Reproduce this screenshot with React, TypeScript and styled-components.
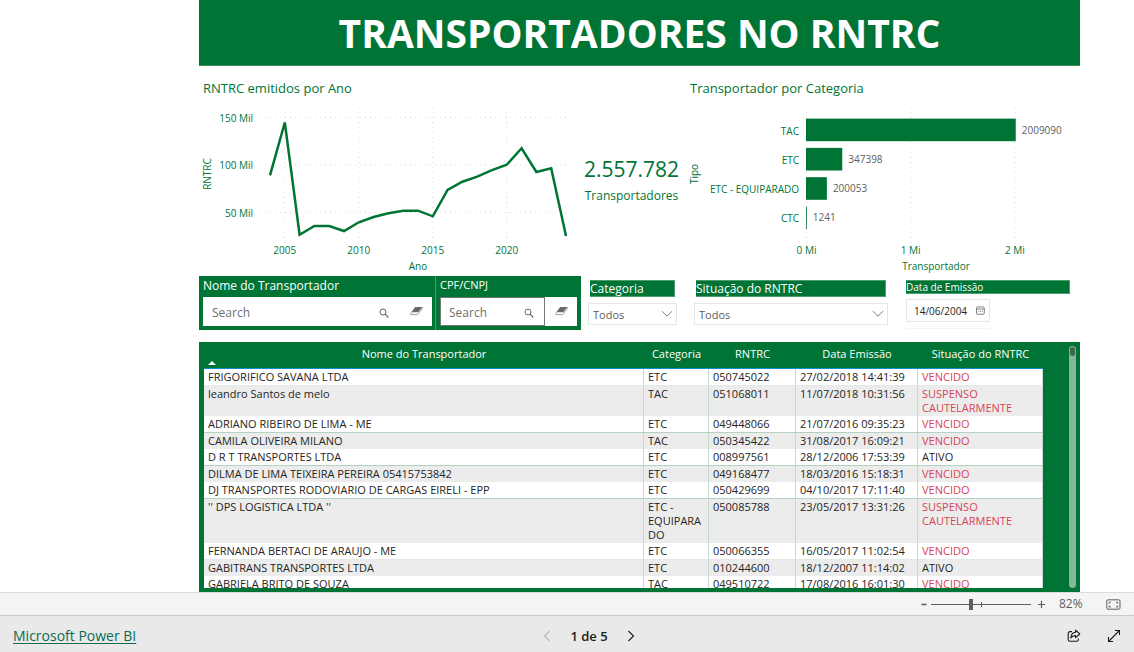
import React from "react";
import styled, { createGlobalStyle } from "styled-components";

const green = "#007435";
const sans = '"Open Sans", "Noto Sans", sans-serif';

const GlobalStyle = createGlobalStyle`
  *, *::before, *::after { box-sizing: border-box; }
  body { margin: 0; background: #fff; font-family: ${sans}; }
  button, input, select { font-family: inherit; }
`;

const Shell = styled.div`
  display: flex;
  flex-direction: column;
  height: 100vh;
`;

const Report = styled.main`
  flex: 1;
  min-height: 0;
  display: flex;
  flex-direction: column;
  padding: 0 54px 0 199px;
  overflow: hidden;
`;

const Banner = styled.h1`
  flex: none;
  display: flex;
  align-items: center;
  justify-content: center;
  height: 66px;
  margin: 0;
  background: ${green};
  border-bottom: 1px solid #3d9364;
  color: #fff;
  font-size: 39px;
  line-height: 40px;
  font-weight: 700;
`;

const Charts = styled.section`
  flex: none;
  display: grid;
  grid-template-columns: 382fr 105fr 394fr;
  height: 210px;
`;

const Visual = styled.div`
  display: flex;
  flex-direction: column;
  min-width: 0;
`;

const VisualTitle = styled.h2`
  margin: 0;
  padding: 12px 4px 0;
  height: 34px;
  color: ${green};
  font-size: 13px;
  line-height: 20px;
  font-weight: 400;
  white-space: nowrap;
`;

const Plot = styled.svg`
  display: block;
  width: 100%;
  height: 176px;
  overflow: visible;
  font-size: 10px;
  fill: ${green};
`;

const Card = styled.div`
  display: flex;
  flex-direction: column;
  align-items: center;
  padding: 88px 4px 0 0;
  color: ${green};
  white-space: nowrap;
`;

const CardValue = styled.div`
  font-size: 21px;
  line-height: 30px;
`;

const CardLabel = styled.div`
  font-size: 12px;
  line-height: 24px;
`;

const Filters = styled.section`
  flex: none;
  display: grid;
  grid-template-columns: 382fr 105fr 210fr 184fr;
  height: 66px;
`;

const SearchGroup = styled.div`
  display: grid;
  grid-template-columns: 236fr 146fr;
  height: 54px;
  background: ${green};
`;

const SearchPanel = styled.form<{ $divided?: boolean }>`
  display: flex;
  flex-direction: column;
  min-width: 0;
  padding: ${(p) => (p.$divided ? "0 4px" : "0 3px 0 4px")};
  border-left: ${(p) => (p.$divided ? "1px solid #4c9c70" : "0")};
`;

const SearchLabel = styled.label<{ $small?: boolean }>`
  height: 21px;
  color: #fff;
  font-size: ${(p) => (p.$small ? 11 : 12)}px;
  line-height: ${(p) => (p.$small ? 18 : 20)}px;
  font-weight: 500;
  white-space: nowrap;
`;

const SearchRow = styled.div`
  display: flex;
  height: 29px;
  background: #fff;
`;

const SearchField = styled.div<{ $boxed?: boolean }>`
  flex: 1;
  display: flex;
  align-items: center;
  min-width: 0;
  padding: 3px 7px 0 8px;
  border: ${(p) => (p.$boxed ? "1px solid #777" : "1px solid #fff")};
`;

const SearchInput = styled.input`
  flex: 1;
  min-width: 0;
  width: 0;
  padding: 0;
  border: 0;
  outline: 0;
  background: none;
  color: #444;
  font-size: 12px;
  line-height: 16px;
  &::placeholder { color: #707070; opacity: 1; }
`;

const IconButton = styled.button<{ $w?: number; $h?: number }>`
  display: flex;
  align-items: center;
  justify-content: center;
  width: ${(p) => p.$w ?? 16}px;
  height: ${(p) => p.$h ?? 16}px;
  padding: 0;
  border: 0;
  background: none;
  color: #1b1b1b;
  &:disabled { color: #b8b8b8; }
`;

const Slicer = styled.div`
  display: flex;
  flex-direction: column;
  min-width: 0;
  padding: 4px 8px 0;
`;

const CategorySlicer = styled(Slicer)`
  padding: 4px 9px 0 7px;
`;

const DateSlicer = styled(Slicer)`
  padding: 4px 10px 0;
`;

const SlicerLabel = styled.label<{ $small?: boolean }>`
  margin: ${(p) => (p.$small ? "0 0 5px" : "0 2px 6px")};
  height: ${(p) => (p.$small ? 14 : 17)}px;
  background: ${green};
  border: 1px solid #4c9c70;
  border-left: 0;
  color: #fff;
  font-size: ${(p) => (p.$small ? 10 : 12)}px;
  line-height: ${(p) => (p.$small ? 13 : 16)}px;
  font-weight: 500;
  white-space: nowrap;
`;

const SelectBox = styled.div`
  display: grid;
  align-items: center;
  height: 22px;
  border: 1px solid #e6e6e6;
  & > * { grid-area: 1 / 1; }
  & > svg { justify-self: end; margin-right: 3px; pointer-events: none; }
`;

const Select = styled.select`
  appearance: none;
  width: 100%;
  height: 20px;
  padding: 0 4px;
  border: 0;
  background: none;
  color: #605e5c;
  font-size: 11px;
`;

const DateRange = styled.div`
  width: 84px;
  height: 30px;
  border-bottom: 1px solid #f4f4f4;
`;

const DateBox = styled.div`
  display: flex;
  align-items: center;
  height: 23px;
  padding: 0 4px 0 7px;
  border: 1px solid #e6e6e6;
`;

const DateInput = styled.input`
  flex: 1;
  min-width: 0;
  padding: 0;
  border: 0;
  background: none;
  color: #252423;
  font-size: 10px;
`;

const TablePanel = styled.section`
  flex: 1;
  min-height: 0;
  display: flex;
  justify-content: space-between;
  padding: 0 4px 4px 5px;
  background: ${green};
`;

const TableClip = styled.div`
  flex: 1;
  min-width: 0;
  margin-right: 26px;
  overflow: hidden;
`;

const Table = styled.table`
  width: 100%;
  table-layout: fixed;
  border-collapse: separate;
  border-spacing: 0;
  font-size: 11px;
  line-height: 14px;
  color: #252423;
`;

const HeadCell = styled.th`
  height: 27px;
  padding: 5px 0 0;
  vertical-align: top;
  border-bottom: 1px solid #118dcf;
  color: #fff;
  font-weight: 500;
  line-height: 14px;
  white-space: nowrap;
`;

const SortMark = styled.svg`
  display: block;
  margin: 0 0 0 4px;
`;

const Row = styled.tr<{ $accent?: boolean }>`
  background: #fff;
  & > td { border-bottom: 1px solid ${(p) => (p.$accent ? "#b3d2c1" : "#e4e8e6")}; }
  &:nth-child(even) { background: #ececec; }
  &:nth-child(even) > td { border-bottom: 0; }
`;

const Cell = styled.td<{ $alert?: boolean }>`
  padding: 1px 4px;
  vertical-align: top;
  overflow-wrap: anywhere;
  border-right: 1px solid #c6dbd0;
  color: ${(p) => (p.$alert ? "#d64554" : "inherit")};
`;

const ScrollTrack = styled.div`
  width: 7px;
  margin-top: 4px;
  border-radius: 4px;
  background: #7fb99a;
`;

const ScrollThumb = styled.div`
  height: 11px;
  border-radius: 4px;
  background: #3c6650;
  border: 1px solid #7fb99a;
`;

const ZoomBar = styled.div`
  flex: none;
  display: flex;
  align-items: center;
  justify-content: flex-end;
  height: 23px;
  padding: 0 13px 0 0;
  border-top: 1px solid #dcdcdc;
  background: #f4f4f4;
  color: #605e5c;
`;

const ZoomRange = styled.input`
  appearance: none;
  width: 100px;
  height: 11px;
  margin: 0 4px 0 1px;
  background:
    linear-gradient(#605e5c, #605e5c) 50px 3px / 1px 5px no-repeat,
    linear-gradient(#605e5c, #605e5c) 0 5px / 100% 1px no-repeat;
  &::-webkit-slider-thumb {
    appearance: none;
    width: 4px;
    height: 11px;
    background: #605e5c;
  }
`;

const ZoomValue = styled.output`
  width: 24px;
  margin: 0 23px 0 12px;
  font-size: 12px;
  line-height: 16px;
  white-space: nowrap;
`;

const Footer = styled.footer`
  flex: none;
  display: grid;
  grid-template-columns: 12fr auto 11fr;
  align-items: center;
  height: 37px;
  padding: 3px 13px 0;
  border-top: 1px solid #c8c8c8;
  background: #e9e9e9;
`;

const BrandLink = styled.a`
  justify-self: start;
  color: #0b6a52;
  font-size: 14px;
  line-height: 20px;
  text-underline-offset: 2px;
`;

const Pager = styled.nav`
  display: flex;
  align-items: center;
  gap: 18px;
`;

const PageText = styled.span`
  color: #1b1b1b;
  font-size: 13px;
  line-height: 20px;
  font-weight: 600;
`;

const FooterActions = styled.div`
  justify-self: end;
  display: flex;
  gap: 26px;
`;

const emitted = [
  89, 144.7, 26.6, 35.8, 35.8, 30.5, 39.7, 45.3, 49.2, 51.9, 51.9, 46, 73.7,
  82.4, 87.7, 94.7, 100.3, 117.6, 92.6, 96.5, 25.3,
];
const yearX = (year: number) => 71 + (year - 2004) * 14.8;
const countY = (v: number) => 17.5 + (150 - v) * 0.95;

const LineChart = () => (
  <Plot viewBox="0 0 382 176" role="img" aria-label="RNTRC emitidos por Ano">
    <g stroke="#dcdcdc" strokeDasharray="1 4">
      {[150, 100, 50].map((v) => (
        <line key={v} x1="61" x2="375" y1={countY(v)} y2={countY(v)} />
      ))}
      {[2005, 2010, 2015, 2020].map((y) => (
        <line key={y} x1={yearX(y)} x2={yearX(y)} y1="7" y2="143" />
      ))}
    </g>
    <polyline
      fill="none"
      stroke={green}
      strokeWidth="2.5"
      points={emitted.map((v, i) => `${yearX(2004 + i)},${countY(v)}`).join(" ")}
    />
    {[150, 100, 50].map((v) => (
      <text key={v} x="54" y={countY(v) + 4} textAnchor="end">{`${v} Mil`}</text>
    ))}
    {[2005, 2010, 2015, 2020].map((y) => (
      <text key={y} x={yearX(y)} y="154" textAnchor="middle">{y}</text>
    ))}
    <text x="219" y="170" textAnchor="middle">Ano</text>
    <text transform="translate(12 74) rotate(-90)" textAnchor="middle">RNTRC</text>
  </Plot>
);

const categories = [
  { name: "TAC", total: 2009090 },
  { name: "ETC", total: 347398 },
  { name: "ETC - EQUIPARADO", total: 200053 },
  { name: "CTC", total: 1241 },
];
const totalWidth = (v: number) => Math.max(0.8, (v / 1e6) * 104.4);

const BarChart = () => (
  <Plot viewBox="0 0 394 176" role="img" aria-label="Transportador por Categoria">
    {[0, 1, 2].map((m) => (
      <g key={m}>
        <line x1={120.5 + m * 104.2} x2={120.5 + m * 104.2} y1="7" y2="143" stroke="#dcdcdc" strokeDasharray="1 4" />
        <text x={120.5 + m * 104.2} y="154" textAnchor="middle">{`${m} Mi`}</text>
      </g>
    ))}
    {categories.map((c, i) => (
      <g key={c.name}>
        <rect x="120" y={18.6 + i * 29.3} width={totalWidth(c.total)} height="22.6" />
        <text x="113" y={34.5 + i * 29.3} textAnchor="end">{c.name}</text>
        <text x={126 + totalWidth(c.total)} y={33.5 + i * 29.3} fill="#605e5c">{c.total}</text>
      </g>
    ))}
    <text x="250" y="170" textAnchor="middle">Transportador</text>
    <text transform="translate(12 74) rotate(-90)" textAnchor="middle">Tipo</text>
  </Plot>
);

const SearchIcon = () => (
  <svg width="10" height="10" viewBox="0 0 10 10" fill="none" stroke="#666" aria-hidden="true">
    <circle cx="4" cy="4" r="3" />
    <path d="M6.2 6.2 9.3 9.5" strokeWidth="1.1" />
  </svg>
);

const EraserIcon = () => (
  <svg width="13" height="10" viewBox="0 0 13 10" aria-hidden="true">
    <path d="M5.2 1h7.3L8.4 6.200H1.300z" fill="#6a6a6a" />
    <path d="M1.300 6.200 .7 8.600h7L12.200 3V1.200" fill="none" stroke="#8a8a8a" strokeWidth=".8" />
  </svg>
);

const ChevronDown = () => (
  <svg width="12" height="8" viewBox="0 0 12 8" fill="none" stroke="#777" aria-hidden="true">
    <path d="m1 1.2 5 5 5-5" />
  </svg>
);

const CalendarIcon = () => (
  <svg width="9" height="9" viewBox="0 0 9 9" fill="none" stroke="#777" strokeWidth=".9" aria-hidden="true">
    <rect x=".5" y=".9" width="7.8" height="7.4" rx="1.2" />
    <path d="M.5 3h7.8" />
    <path d="M2.200 5.300h4.600" strokeDasharray="1 .8" />
  </svg>
);

type Carrier = [string, string, string, string, string];
const carriers: Carrier[] = [
  ["FRIGORIFICO SAVANA LTDA", "ETC", "050745022", "27/02/2018 14:41:39", "VENCIDO"],
  ["leandro Santos de melo", "TAC", "051068011", "11/07/2018 10:31:56", "SUSPENSO CAUTELARMENTE"],
  ["ADRIANO RIBEIRO DE LIMA - ME", "ETC", "049448066", "21/07/2016 09:35:23", "VENCIDO"],
  ["CAMILA OLIVEIRA MILANO", "TAC", "050345422", "31/08/2017 16:09:21", "VENCIDO"],
  ["D R T TRANSPORTES LTDA", "ETC", "008997561", "28/12/2006 17:53:39", "ATIVO"],
  ["DILMA DE LIMA TEIXEIRA PEREIRA 05415753842", "ETC", "049168477", "18/03/2016 15:18:31", "VENCIDO"],
  ["DJ TRANSPORTES RODOVIARIO DE CARGAS EIRELI - EPP", "ETC", "050429699", "04/10/2017 17:11:40", "VENCIDO"],
  ["'' DPS LOGISTICA LTDA ''", "ETC - EQUIPARADO", "050085788", "23/05/2017 13:31:26", "SUSPENSO CAUTELARMENTE"],
  ["FERNANDA BERTACI DE ARAUJO - ME", "ETC", "050066355", "16/05/2017 11:02:54", "VENCIDO"],
  ["GABITRANS TRANSPORTES LTDA", "ETC", "010244600", "18/12/2007 11:14:02", "ATIVO"],
  ["GABRIELA BRITO DE SOUZA", "TAC", "049510722", "17/08/2016 16:01:30", "VENCIDO"],
];
const accentRows = [2, 4, 6];

const Col = styled.col<{ $w?: number }>`
  width: ${(p) => (p.$w ? `${p.$w}px` : "auto")};
`;

export default function App() {
  return (
    <Shell>
      <GlobalStyle />
      <Report>
        <Banner>TRANSPORTADORES NO RNTRC</Banner>

        <Charts>
          <Visual>
            <VisualTitle>RNTRC emitidos por Ano</VisualTitle>
            <LineChart />
          </Visual>
          <Card>
            <CardValue>2.557.782</CardValue>
            <CardLabel>Transportadores</CardLabel>
          </Card>
          <Visual>
            <VisualTitle>Transportador por Categoria</VisualTitle>
            <BarChart />
          </Visual>
        </Charts>

        <Filters>
          <SearchGroup>
            <SearchPanel>
              <SearchLabel htmlFor="nome">Nome do Transportador</SearchLabel>
              <SearchRow>
                <SearchField>
                  <SearchInput id="nome" type="text" placeholder="Search" />
                  <IconButton type="button" aria-label="Pesquisar nome"><SearchIcon /></IconButton>
                </SearchField>
                <IconButton type="button" aria-label="Limpar nome" $w={32} $h={28}><EraserIcon /></IconButton>
              </SearchRow>
            </SearchPanel>
            <SearchPanel $divided>
              <SearchLabel htmlFor="cpf" $small>CPF/CNPJ</SearchLabel>
              <SearchRow>
                <SearchField $boxed>
                  <SearchInput id="cpf" type="text" placeholder="Search" />
                  <IconButton type="button" aria-label="Pesquisar CPF/CNPJ"><SearchIcon /></IconButton>
                </SearchField>
                <IconButton type="button" aria-label="Limpar CPF/CNPJ" $w={32} $h={28}><EraserIcon /></IconButton>
              </SearchRow>
            </SearchPanel>
          </SearchGroup>
          <CategorySlicer>
            <SlicerLabel htmlFor="categoria">Categoria</SlicerLabel>
            <SelectBox>
              <Select id="categoria"><option>Todos</option></Select>
              <ChevronDown />
            </SelectBox>
          </CategorySlicer>
          <Slicer>
            <SlicerLabel htmlFor="situacao">Situação do RNTRC</SlicerLabel>
            <SelectBox>
              <Select id="situacao"><option>Todos</option></Select>
              <ChevronDown />
            </SelectBox>
          </Slicer>
          <DateSlicer>
            <SlicerLabel htmlFor="emissao" $small>Data de Emissão</SlicerLabel>
            <DateRange>
              <DateBox>
                <DateInput id="emissao" type="text" defaultValue="14/06/2004" />
                <CalendarIcon />
              </DateBox>
            </DateRange>
          </DateSlicer>
        </Filters>

        <TablePanel>
          <TableClip>
            <Table>
              <colgroup>
                <Col />
                <Col $w={65} />
                <Col $w={87} />
                <Col $w={122} />
                <Col $w={125} />
              </colgroup>
              <thead>
                <tr>
                  <HeadCell scope="col" aria-sort="ascending">
                    Nome do Transportador
                    <SortMark width="8" height="4" viewBox="0 0 8 4" aria-hidden="true">
                      <path d="M0 4 4 0l4 4z" fill="#fff" />
                    </SortMark>
                  </HeadCell>
                  <HeadCell scope="col">Categoria</HeadCell>
                  <HeadCell scope="col">RNTRC</HeadCell>
                  <HeadCell scope="col">Data Emissão</HeadCell>
                  <HeadCell scope="col">Situação do RNTRC</HeadCell>
                </tr>
              </thead>
              <tbody>
                {carriers.map(([name, category, code, issued, status], i) => (
                  <Row key={code} $accent={accentRows.includes(i)}>
                    <Cell>{name}</Cell>
                    <Cell>{category}</Cell>
                    <Cell>{code}</Cell>
                    <Cell>{issued}</Cell>
                    <Cell $alert={status !== "ATIVO"}>{status}</Cell>
                  </Row>
                ))}
              </tbody>
            </Table>
          </TableClip>
          <ScrollTrack>
            <ScrollThumb />
          </ScrollTrack>
        </TablePanel>
      </Report>

      <ZoomBar>
        <IconButton type="button" aria-label="Reduzir" $w={12}>
          <svg width="10" height="10" viewBox="0 0 10 10" stroke="#605e5c" strokeWidth="1.6" aria-hidden="true">
            <path d="M2.5 5.5h5" />
          </svg>
        </IconButton>
        <ZoomRange type="range" min="0" max="100" defaultValue="40" aria-label="Zoom" />
        <IconButton type="button" aria-label="Ampliar" $w={12}>
          <svg width="9" height="9" viewBox="0 0 9 9" stroke="#605e5c" strokeWidth="1.2" aria-hidden="true">
            <path d="M1 4.5h7M4.5 1v7" />
          </svg>
        </IconButton>
        <ZoomValue>82%</ZoomValue>
        <IconButton type="button" aria-label="Ajustar à página" $w={15}>
          <svg width="15" height="11" viewBox="0 0 15 11" fill="none" stroke="#605e5c" aria-hidden="true">
            <rect x=".8" y=".8" width="13.2" height="9.4" rx="1.2" />
            <path d="M3.2 4.6V3.2h1.6M10 3.2h1.7v1.4M11.7 6.6V8H10M4.8 8H3.2V6.6" />
          </svg>
        </IconButton>
      </ZoomBar>

      <Footer>
        <BrandLink href="#powerbi">Microsoft Power BI</BrandLink>
        <Pager aria-label="Páginas">
          <IconButton type="button" aria-label="Página anterior" disabled $w={10}>
            <svg width="8" height="12" viewBox="0 0 8 12" fill="none" stroke="currentColor" strokeWidth="1.1" aria-hidden="true">
              <path d="M6.5 1 1.5 6l5 5" />
            </svg>
          </IconButton>
          <PageText>1 de 5</PageText>
          <IconButton type="button" aria-label="Próxima página" $w={10}>
            <svg width="8" height="12" viewBox="0 0 8 12" fill="none" stroke="currentColor" strokeWidth="1.1" aria-hidden="true">
              <path d="m1.5 1 5 5-5 5" />
            </svg>
          </IconButton>
        </Pager>
        <FooterActions>
          <IconButton type="button" aria-label="Compartilhar" $w={14}>
            <svg width="14" height="14" viewBox="0 0 14 14" fill="none" stroke="currentColor" strokeWidth="1.1" strokeLinejoin="round" aria-hidden="true">
              <path d="M5 2.6H3A1.8 1.8 0 0 0 1.2 4.4v6A1.8 1.8 0 0 0 3 12.2h6.6a1.8 1.8 0 0 0 1.8-1.8V9.6" />
              <path d="M8.6 1.2 12.8 5 8.6 8.6V6.6C6.5 6.5 5 7.300 3.900 9 4 5.700 5.600 3.500 8.600 3.200z" />
            </svg>
          </IconButton>
          <IconButton type="button" aria-label="Tela inteira" $w={14}>
            <svg width="14" height="14" viewBox="0 0 14 14" fill="none" stroke="currentColor" strokeWidth="1.1" aria-hidden="true">
              <path d="M1.5 12.5 12.5 1.5M8 1.5h4.5V6M1.5 8v4.5H6" />
            </svg>
          </IconButton>
        </FooterActions>
      </Footer>
    </Shell>
  );
}
